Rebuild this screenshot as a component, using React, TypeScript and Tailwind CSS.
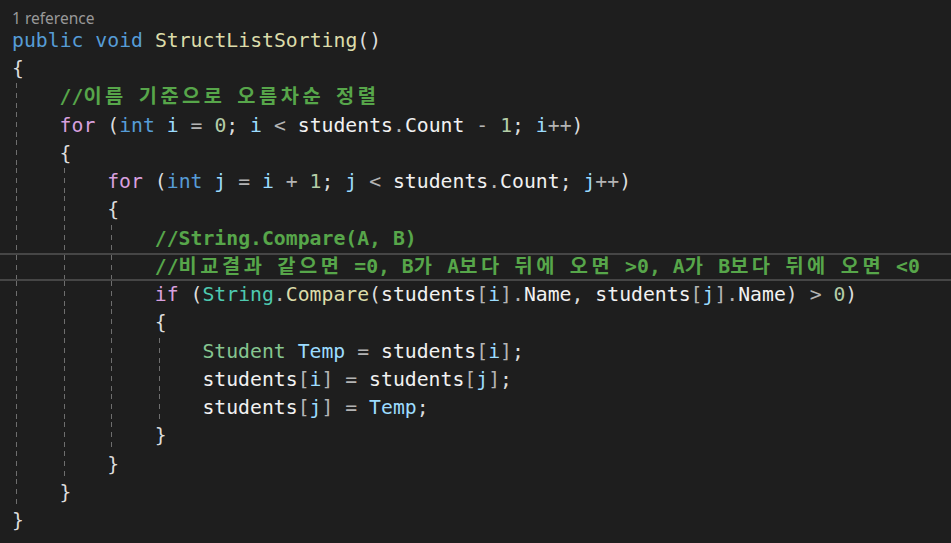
type Tok = [string, string];

const kw = 'text-[#569CD6]';
const ctrl = 'text-[#D8A0DF]';
const fn = 'text-[#DCDCAA]';
const loc = 'text-[#9CDCFE]';
const num = 'text-[#B5CEA8]';
const op = 'text-[#B4B4B4]';
const pn = 'text-[#DCDCDC]';
const fld = 'text-[#F1F1F1]';
const cls = 'text-[#4EC9B0]';
const st = 'text-[#86C691]';
const cm = 'text-[#57A64A] font-bold';

type Line = { indent: number; toks: Tok[]; active?: boolean };

const lines: Line[] = [
  { indent: 0, toks: [['public', kw], [' ', pn], ['void', kw], [' ', pn], ['StructListSorting', fn], ['()', pn]] },
  { indent: 0, toks: [['{', pn]] },
  { indent: 1, toks: [['//이름 기준으로 오름차순 정렬', cm]] },
  {
    indent: 1,
    toks: [
      ['for', ctrl], [' (', pn], ['int', kw], [' ', pn], ['i', loc], [' = ', op], ['0', num], ['; ', pn],
      ['i', loc], [' < ', op], ['students', fld], ['.', op], ['Count', fld], [' - ', op], ['1', num], ['; ', pn],
      ['i', loc], ['++', op], [')', pn],
    ],
  },
  { indent: 1, toks: [['{', pn]] },
  {
    indent: 2,
    toks: [
      ['for', ctrl], [' (', pn], ['int', kw], [' ', pn], ['j', loc], [' = ', op], ['i', loc], [' + ', op], ['1', num], ['; ', pn],
      ['j', loc], [' < ', op], ['students', fld], ['.', op], ['Count', fld], ['; ', pn], ['j', loc], ['++', op], [')', pn],
    ],
  },
  { indent: 2, toks: [['{', pn]] },
  { indent: 3, toks: [['//String.Compare(A, B)', cm]] },
  { indent: 3, active: true, toks: [['//비교결과 같으면 =0, B가 A보다 뒤에 오면 >0, A가 B보다 뒤에 오면 <0', cm]] },
  {
    indent: 3,
    toks: [
      ['if', ctrl], [' (', pn], ['String', cls], ['.', op], ['Compare', fn], ['(', pn],
      ['students', fld], ['[', op], ['i', loc], [']', op], ['.', op], ['Name', fld], [', ', pn],
      ['students', fld], ['[', op], ['j', loc], [']', op], ['.', op], ['Name', fld], [')', pn], [' > ', op], ['0', num], [')', pn],
    ],
  },
  { indent: 3, toks: [['{', pn]] },
  {
    indent: 4,
    toks: [['Student', st], [' ', pn], ['Temp', loc], [' = ', op], ['students', fld], ['[', op], ['i', loc], [']', op], [';', pn]],
  },
  {
    indent: 4,
    toks: [
      ['students', fld], ['[', op], ['i', loc], [']', op], [' = ', op], ['students', fld], ['[', op], ['j', loc], [']', op], [';', pn],
    ],
  },
  { indent: 4, toks: [['students', fld], ['[', op], ['j', loc], [']', op], [' = ', op], ['Temp', loc], [';', pn]] },
  { indent: 3, toks: [['}', pn]] },
  { indent: 2, toks: [['}', pn]] },
  { indent: 1, toks: [['}', pn]] },
  { indent: 0, toks: [['}', pn]] },
];

// hangul gets a wider cell in the editor than the fallback font gives it
const renderText = (text: string) =>
  Array.from(text).map((ch, i) =>
    /[\uAC00-\uD7A3]/.test(ch) ? (
      <span key={i} className="inline-block w-[21.7px]">
        {ch}
      </span>
    ) : (
      ch
    )
  );

const App = () => {
  return (
    <div className="w-full h-screen overflow-hidden bg-[#1E1E1E]">
      <div className="h-[27px] pl-[12px] pt-[8px] text-[15.5px] leading-[20px] text-[#999999] font-['Noto_Sans',sans-serif]">
        1 reference
      </div>
      <div className="font-['DejaVu_Sans_Mono','Noto_Sans_CJK_KR',monospace] text-[19.77px] whitespace-pre">
        {lines.map((line, idx) => (
          <div
            key={idx}
            className={
              line.active
                ? 'flex h-[28.24px] leading-[24.24px] pl-[12px] border-y-2 border-[#464646]'
                : 'flex h-[28.24px] leading-[28.24px] pl-[12px]'
            }
          >
            {Array.from({ length: line.indent }).map((_, k) => (
              <span
                key={k}
                className="inline-block w-[47.6px] shrink-0 bg-[repeating-linear-gradient(to_bottom,#6E6E6E_0_5px,transparent_5px_10px)] bg-[length:1px_100%] bg-no-repeat bg-[position:4px_0]"
              />
            ))}
            <span>
              {line.toks.map(([text, c], i) => (
                <span key={i} className={c}>
                  {renderText(text)}
                </span>
              ))}
            </span>
          </div>
        ))}
      </div>
    </div>
  );
};

export default App;
